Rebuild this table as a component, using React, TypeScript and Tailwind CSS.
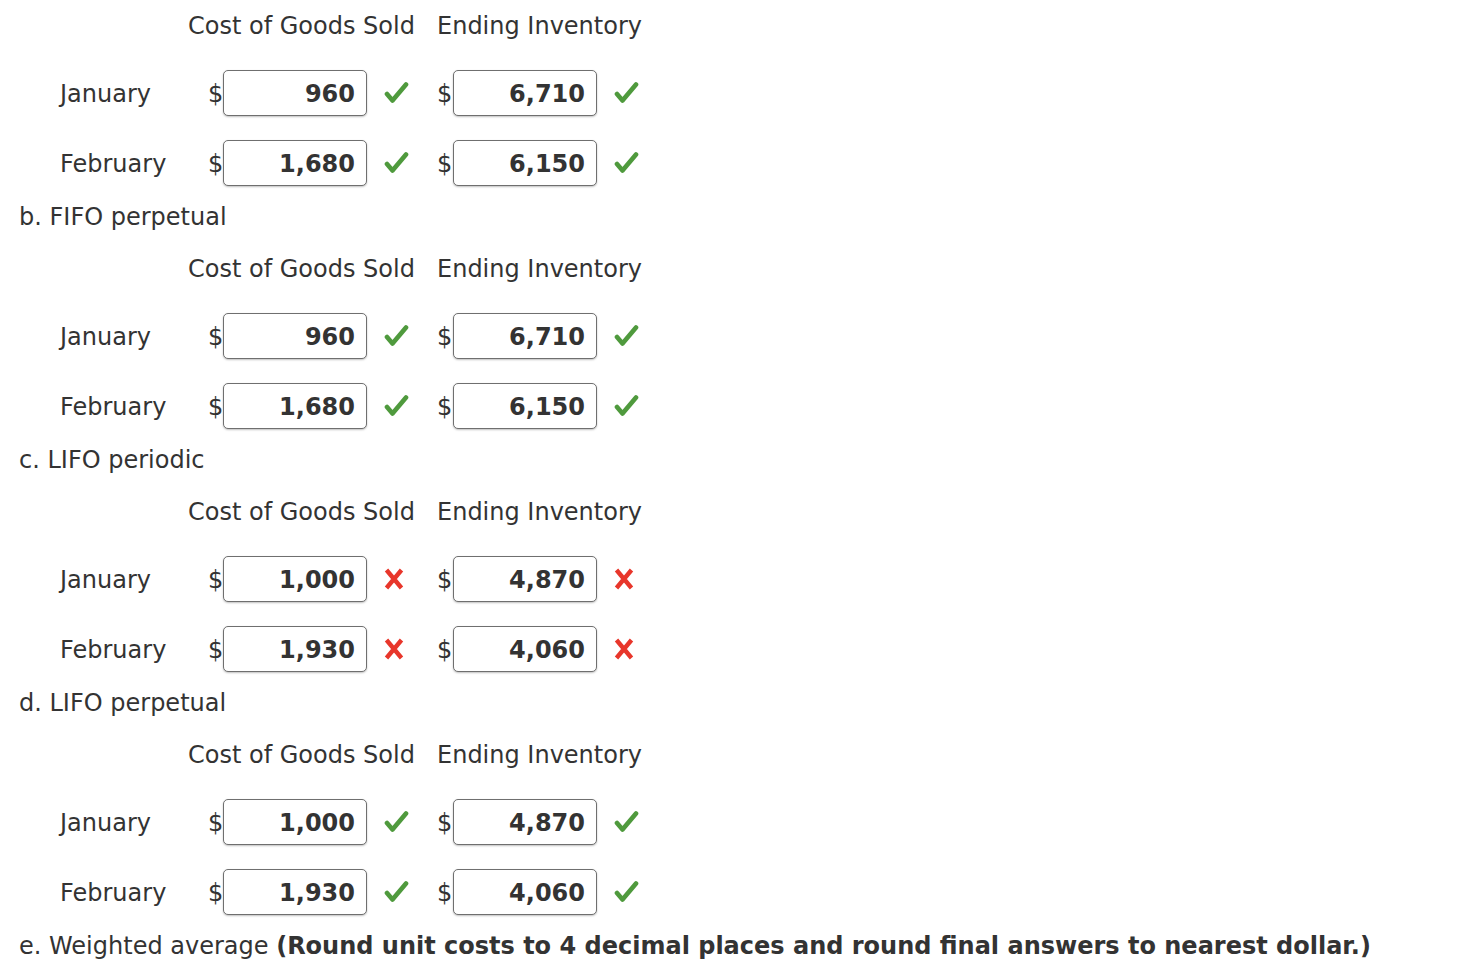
import React from "react";

const Check = () => (
  <svg width="26" height="26" viewBox="0 0 26 26" className="block">
    <path d="M4 14 L9.5 20.5 L23 4.5" fill="none" stroke="#4f9a3d" strokeWidth="4.6" strokeLinecap="round" strokeLinejoin="round" />
  </svg>
);

const Cross = () => (
  <svg width="20" height="22" viewBox="0 0 20 22" className="block">
    <path d="M2.5 2 L17.5 20 M17.5 2 L2.5 20" fill="none" stroke="#e8362b" strokeWidth="4.4" strokeLinecap="butt" />
  </svg>
);

type Row = { month: string; cogs: string; ei: string; ok: boolean };

const Box = ({ v }: { v: string }) => (
  <div className="w-[144px] shrink-0 h-[46px] border-[1.5px] border-[#6f6f6f] rounded-[5px] shadow-[0_1px_2px_rgba(0,0,0,0.25)] bg-white flex items-center justify-end pr-[11px] pt-[2px] font-bold text-[#333]">
    {v}
  </div>
);

const Mark = ({ ok }: { ok: boolean }) => (
  <div className="w-[70px] shrink-0 h-[46px] flex items-center pl-[16px]">{ok ? <Check /> : <div className="pl-[1px]"><Cross /></div>}</div>
);

const DataRow = ({ r, className }: { r: Row; className: string }) => (
  <div className={"flex items-center h-[46px] " + className}>
    <div className="w-[208px] shrink-0 pl-[60px] pt-[2px]">{r.month}</div>
    <div className="w-[15px] shrink-0 pt-[2px]">$</div>
    <Box v={r.cogs} />
    <Mark ok={r.ok} />
    <div className="w-[16px] shrink-0 pt-[2px]">$</div>
    <Box v={r.ei} />
    <Mark ok={r.ok} />
  </div>
);

const Section = ({ rows, label, first }: { rows: Row[]; label: React.ReactNode; first?: boolean }) => (
  <div className={first ? "" : "mt-[12px]"}>
    <div className="flex items-center h-[50px] pt-[2px]">
      <div className="w-[437px] shrink-0 pl-[188px]">Cost of Goods Sold</div>
      <div>Ending Inventory</div>
    </div>
    <DataRow r={rows[0]} className="mt-[20px]" />
    <DataRow r={rows[1]} className="mt-[24px]" />
    <div className="h-[30px] mt-[15px] flex items-center pl-[19px] pt-[2px] whitespace-nowrap">{label}</div>
  </div>
);

export default function App() {
  return (
    <div className="w-[1476px] h-[978px] bg-white text-[#333] text-[24px] leading-none overflow-hidden" style={{ fontFamily: '"DejaVu Sans", Verdana, sans-serif' }}>
      <Section
        first
        rows={[
          { month: "January", cogs: "960", ei: "6,710", ok: true },
          { month: "February", cogs: "1,680", ei: "6,150", ok: true },
        ]}
        label="b. FIFO perpetual"
      />
      <Section
        rows={[
          { month: "January", cogs: "960", ei: "6,710", ok: true },
          { month: "February", cogs: "1,680", ei: "6,150", ok: true },
        ]}
        label="c. LIFO periodic"
      />
      <Section
        rows={[
          { month: "January", cogs: "1,000", ei: "4,870", ok: false },
          { month: "February", cogs: "1,930", ei: "4,060", ok: false },
        ]}
        label="d. LIFO perpetual"
      />
      <Section
        rows={[
          { month: "January", cogs: "1,000", ei: "4,870", ok: true },
          { month: "February", cogs: "1,930", ei: "4,060", ok: true },
        ]}
        label={
          <span>
            e. Weighted average <b>(Round unit costs to 4 decimal places and round final answers to nearest dollar.)</b>
          </span>
        }
      />
    </div>
  );
}
